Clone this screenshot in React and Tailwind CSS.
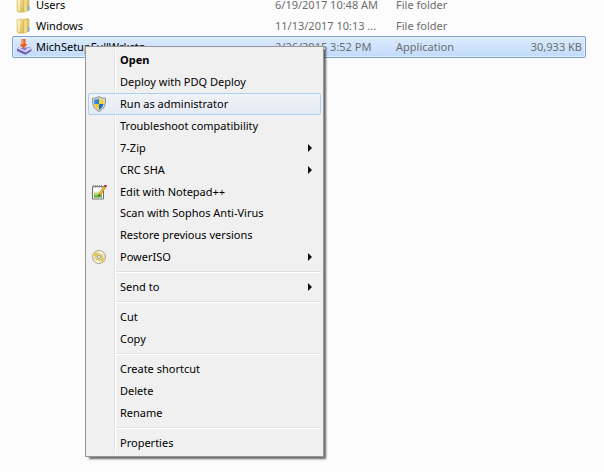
import { clsx } from 'clsx';

const FolderIcon = () => (
  <svg width="16" height="16" viewBox="0 0 16 16" aria-hidden="true">
    <defs>
      <linearGradient id="folderFront" x1="0" x2="1" y1="0" y2="1">
        <stop offset="0" stopColor="#fbf1b4" />
        <stop offset="1" stopColor="#d8b44a" />
      </linearGradient>
    </defs>
    <path d="M6 2l6-1.5 1 1V13l-6 1.5z" fill="#e3c567" stroke="#c9a443" strokeWidth=".5" />
    <path d="M11 9h2.5v4.5L11 14z" fill="#6fb4e0" />
    <path d="M1 1.500L5.500.800l2 1.500v12.800l-5 .2L1 14z" fill="url(#folderFront)" stroke="#d0b04e" strokeWidth=".5" />
    <path d="M7.500 2.500l4-1.500v12.800l-4 1.400z" fill="#efd985" stroke="#cfae50" strokeWidth=".5" />
    <path d="M3 2.500v11.500" stroke="#fffbe0" />
  </svg>
);

const InstallerIcon = () => (
  <svg width="16" height="16" viewBox="0 0 16 16" aria-hidden="true">
    <path d="M1 9.500l4-2 9 1 1.500 2V12l-6 3.700L1 12z" fill="#6b5bb0" />
    <path d="M1 9.500l4-2 9.500 1.500.5 1.500-5.500 3z" fill="#d6d0f0" />
    <path d="M4.500 9.500l3-1 4 1-2.500 2z" fill="#8a7cc8" />
    <path d="M5.500 0h4v5h2l-4 4.500L3.500 5.500h2z" fill="#e8601c" />
    <path d="M6 .5h1.500V5H6z" fill="#f9a168" />
  </svg>
);

const ShieldIcon = () => (
  <svg width="16" height="16" viewBox="0 0 16 16" aria-hidden="true">
    <path d="M8 .5C6 1.800 3.800 2.300 1.500 2.300c-.3 6 1 10.500 6.500 13.200 5.500-2.700 6.800-7.200 6.500-13.200C12.200 2.300 10 1.800 8 .5z" fill="#d5d8da" stroke="#8b8f92" />
    <path d="M8 2.500C6.500 3.300 5 3.700 3.200 3.800 3.100 5.400 3.200 6.700 3.500 8H8z" fill="#2a86dc" />
    <path d="M8 2.500c1.500.8 3 1.200 4.800 1.300.1 1.600 0 2.900-.3 4.200H8z" fill="#fbd42c" />
    <path d="M3.500 8c.6 2.600 1.900 4.500 4.500 6V8z" fill="#f9c81c" />
    <path d="M12.500 8c-.6 2.600-1.900 4.500-4.500 6V8z" fill="#1d6ccb" />
  </svg>
);

const NotepadIcon = () => (
  <svg width="16" height="16" viewBox="0 0 16 16" aria-hidden="true">
    <defs>
      <linearGradient id="notepadPage" x1="0" x2="0" y1="0" y2="1">
        <stop offset="0.200" stopColor="#ffffff" />
        <stop offset="0.600" stopColor="#a9dc66" />
        <stop offset="1" stopColor="#3ba021" />
      </linearGradient>
    </defs>
    <path d="M1.500 2.500h11v12.500h-11z" fill="#fafafa" stroke="#707070" />
    <path d="M3 5h8v8.500H3z" fill="url(#notepadPage)" />
    <path d="M2.500 1v2.500M4.500 1v2.500M6.500 1v2.500M8.500 1v2.500M10.500 1v2.500" stroke="#888" />
    <path d="M13.500 3L8.500 11" stroke="#a06d1c" strokeWidth="2.600" />
    <path d="M13.500 3L8.800 10.500" stroke="#f5bd31" strokeWidth="1.600" />
    <path d="M13.300 1h2.200v2.200h-2z" fill="#8d1420" />
    <path d="M7.300 12.500l.4-2 1.600 1z" fill="#333" />
  </svg>
);

const DiscIcon = () => (
  <svg width="16" height="16" viewBox="0 0 16 16" aria-hidden="true">
    <circle cx="8" cy="8" r="6.500" fill="#eee6c0" stroke="#aaa595" />
    <path d="M8 8L2.500 6.500A6 6 0 015 3zM8 8l5.500 1.500A6 6 0 0111 13z" fill="#ecc93f" />
    <path d="M8 8V2.200a6 6 0 014 1.500zM8 8v5.800a6 6 0 01-4-1.500z" fill="#fffbea" />
    <circle cx="8" cy="8" r="3.200" fill="#f3e9b8" stroke="#d4b23c" />
    <circle cx="8" cy="8" r="1.500" fill="#fff" stroke="#999990" />
  </svg>
);

const files = [
  { name: 'Users', date: '6/19/2017 10:48 AM', type: 'File folder', size: '', Icon: FolderIcon },
  { name: 'Windows', date: '11/13/2017 10:13 ...', type: 'File folder', size: '', Icon: FolderIcon },
  {
    name: 'MichSetupFullWrkstn',
    date: '2/26/2015 3:52 PM',
    type: 'Application',
    size: '30,933 KB',
    Icon: InstallerIcon,
    selected: true,
  },
];

const menuGroups = [
  [
    { label: 'Open', bold: true },
    { label: 'Deploy with PDQ Deploy' },
    { label: 'Run as administrator', Icon: ShieldIcon, active: true },
    { label: 'Troubleshoot compatibility' },
    { label: '7-Zip', submenu: true },
    { label: 'CRC SHA', submenu: true },
    { label: 'Edit with Notepad++', Icon: NotepadIcon, short: true },
    { label: 'Scan with Sophos Anti-Virus' },
    { label: 'Restore previous versions' },
    { label: 'PowerISO', Icon: DiscIcon, submenu: true },
  ],
  [{ label: 'Send to', submenu: true }],
  [{ label: 'Cut' }, { label: 'Copy' }],
  [{ label: 'Create shortcut' }, { label: 'Delete' }, { label: 'Rename' }],
  [{ label: 'Properties' }],
];

function FileList() {
  return (
    <table className="-mt-[6px] ml-3 mr-[18px] block">
      <tbody className="block">
        {files.map(({ name, date, type, size, Icon, selected }) => (
          <tr
            key={name}
            aria-selected={!!selected}
            className={clsx(
              'grid grid-cols-[259px_121px_1fr_auto] items-center border px-[3px] text-[#6d6d6d]',
              selected
                ? 'h-[22px] rounded-xs border-[#7da2ce] bg-linear-to-b from-[#dcebfc] to-[#c1dbfc] shadow-[inset_0_0_0_1px_#e3effd]'
                : 'h-[21px] border-transparent'
            )}
          >
            <td className="flex items-center gap-1 text-black">
              <Icon />
              {name}
            </td>
            <td>{date}</td>
            <td>{type}</td>
            <td>{size}</td>
          </tr>
        ))}
      </tbody>
    </table>
  );
}

function MenuItem({ label, Icon, bold, active, submenu, short }) {
  return (
    <button
      type="button"
      role="menuitem"
      aria-haspopup={submenu ? 'menu' : undefined}
      className={clsx(
        'flex w-full items-center rounded-xs border pl-[2px] pr-2 text-left',
        short ? 'h-[21px]' : 'h-[22px]',
        bold && 'font-bold',
        active ? 'border-[#aecff7] bg-linear-to-b from-[#f0f3f8]/80 to-[#e3eaf5]/80' : 'border-transparent'
      )}
    >
      <span className="mr-[13px] flex w-4 shrink-0">{Icon && <Icon />}</span>
      <span className="flex-1 whitespace-nowrap">{label}</span>
      {submenu && (
        <svg width="4" height="8" viewBox="0 0 4 8" aria-hidden="true">
          <path d="M0 0l4 4-4 4z" fill="#111" />
        </svg>
      )}
    </button>
  );
}

function ContextMenu() {
  return (
    <div
      role="menu"
      className="absolute left-[85px] top-[46px] w-[239px] border border-[#979797] bg-[#f0f0f0] p-[2px] shadow-[3px_3px_2px_-1px_rgba(0,0,0,0.6)]"
    >
      {/* icon gutter groove */}
      <div className="absolute inset-y-[2px] left-[28px] w-[2px] border-l border-r border-l-[#e2e3e3] border-r-white" />
      <div className="relative">
        {menuGroups.map((group, i) => (
          <div key={group[0].label} role="group">
            {i > 0 && (
              <div role="separator" className="ml-7 flex h-2 items-center">
                <div className="h-[2px] w-full border-b border-t border-b-white border-t-[#e0e0e0]" />
              </div>
            )}
            {group.map((item) => (
              <MenuItem key={item.label} {...item} />
            ))}
          </div>
        ))}
      </div>
    </div>
  );
}

export default function App() {
  return (
    <div className="relative flow-root min-h-screen bg-[#fcfcfc] font-['Noto_Sans','Open_Sans',sans-serif] text-[11px] leading-4 text-black">
      <FileList />
      <ContextMenu />
    </div>
  );
}
